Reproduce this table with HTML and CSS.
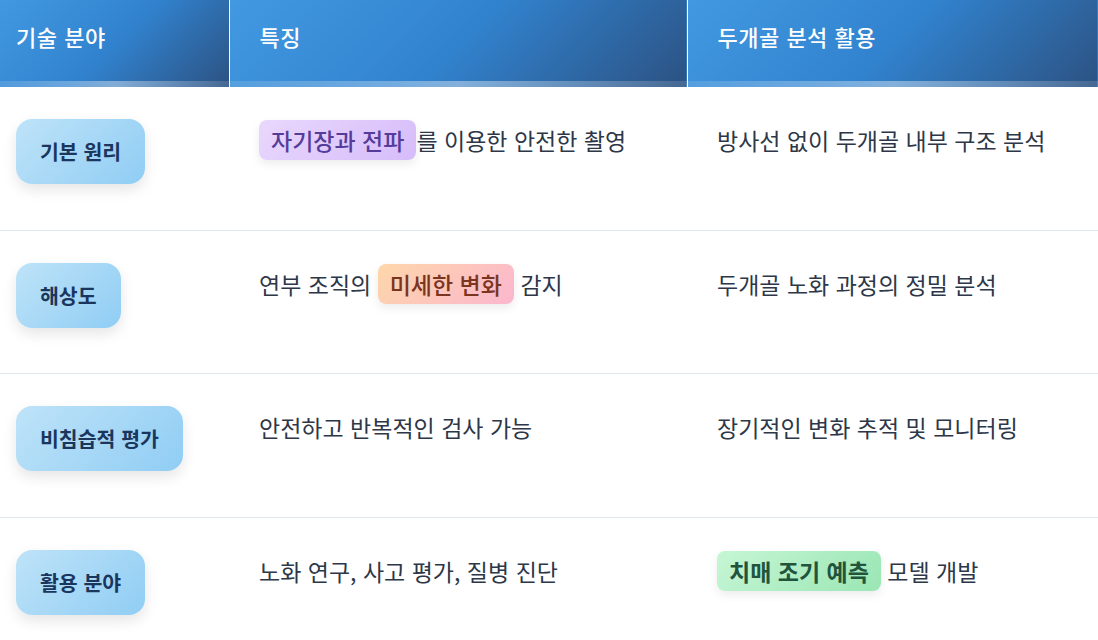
FILE: index.html
```html
<!DOCTYPE html>
<html lang="ko">
<head>
<meta charset="utf-8">
<title>두개골 분석 기술</title>
<link rel="stylesheet" href="styles.css">
</head>
<body>
<table class="tech">
  <colgroup>
    <col class="c1"><col class="c2"><col class="c3">
  </colgroup>
  <thead>
    <tr>
      <th class="first">기술 분야</th>
      <th>특징</th>
      <th class="last">두개골 분석 활용</th>
    </tr>
  </thead>
  <tbody>
    <tr>
      <td class="first"><span class="badge">기본 원리</span></td>
      <td><span class="hl purple">자기장과 전파</span>를 이용한 안전한 촬영</td>
      <td>방사선 없이 두개골 내부 구조 분석</td>
    </tr>
    <tr>
      <td class="first"><span class="badge">해상도</span></td>
      <td>연부 조직의 <span class="hl orange">미세한 변화</span> 감지</td>
      <td>두개골 노화 과정의 정밀 분석</td>
    </tr>
    <tr>
      <td class="first"><span class="badge">비침습적 평가</span></td>
      <td>안전하고 반복적인 검사 가능</td>
      <td>장기적인 변화 추적 및 모니터링</td>
    </tr>
    <tr>
      <td class="first"><span class="badge">활용 분야</span></td>
      <td>노화 연구, 사고 평가, 질병 진단</td>
      <td><span class="hl green">치매 조기 예측</span> 모델 개발</td>
    </tr>
  </tbody>
</table>
</body>
</html>
```
FILE: styles.css
```css
html, body {
  margin: 0;
  padding: 0;
  background: #ffffff;
}
body {
  font-family: "Noto Sans CJK KR", "Noto Sans", sans-serif;
  color: #2d3748;
}
.tech {
  width: 1098px;
  border-collapse: collapse;
  table-layout: fixed;
}
.c1 { width: 229px; }
.c2 { width: 458px; }
.c3 { width: 411px; }

.tech th {
  position: relative;
  text-align: left;
  font-size: 22px;
  font-weight: 500;
  color: #ffffff;
  line-height: 30px;
  padding: 21px 16px 36px 30px;
  background: linear-gradient(135deg, #4299e1 0%, #3182ce 50%, #2c5282 100%);
  border-right: 1px solid rgba(255, 255, 255, 0.9);
  letter-spacing: 0.5px;
}
.tech th.first { padding-left: 16px; }
.tech th.last { border-right: none; }
.tech th::after {
  content: "";
  position: absolute;
  left: 0;
  right: 0;
  bottom: 0;
  height: 6px;
  background: linear-gradient(90deg, rgba(255,255,255,0.12), rgba(255,255,255,0.4), rgba(255,255,255,0.12));
}

.tech td {
  vertical-align: top;
  font-size: 23px;
  line-height: 28px;
  padding: 39px 16px 0 30px;
  height: 103.5px;
  border-bottom: 1px solid #e2e8f0;
}
.tech td.first {
  padding: 32px 16px 0 16px;
  height: 110.5px;
}

.badge {
  display: inline-block;
  font-size: 20.5px;
  font-weight: 700;
  line-height: 25px;
  color: #1a365d;
  padding: 20px 24px;
  border-radius: 16px;
  background: linear-gradient(135deg, #bee3f8 0%, #90cdf4 100%);
  box-shadow: 0 6px 14px rgba(0, 0, 0, 0.1);
}

.hl {
  display: inline-block;
  padding: 6px 12px;
  margin: -6px 0;
  border-radius: 8px;
  font-weight: 500;
  box-shadow: 0 4px 10px rgba(0, 0, 0, 0.08);
}
.hl.purple {
  color: #553c9a;
  background: linear-gradient(135deg, #e9d8fd 0%, #d6bcfa 100%);
}
.hl.orange {
  color: #7b341e;
  background: linear-gradient(135deg, #fed7aa 0%, #fbb6ce 100%);
}
.hl.green {
  color: #22543d;
  font-weight: 700;
  background: linear-gradient(135deg, #c6f6d5 0%, #9ae6b4 100%);
}
```
